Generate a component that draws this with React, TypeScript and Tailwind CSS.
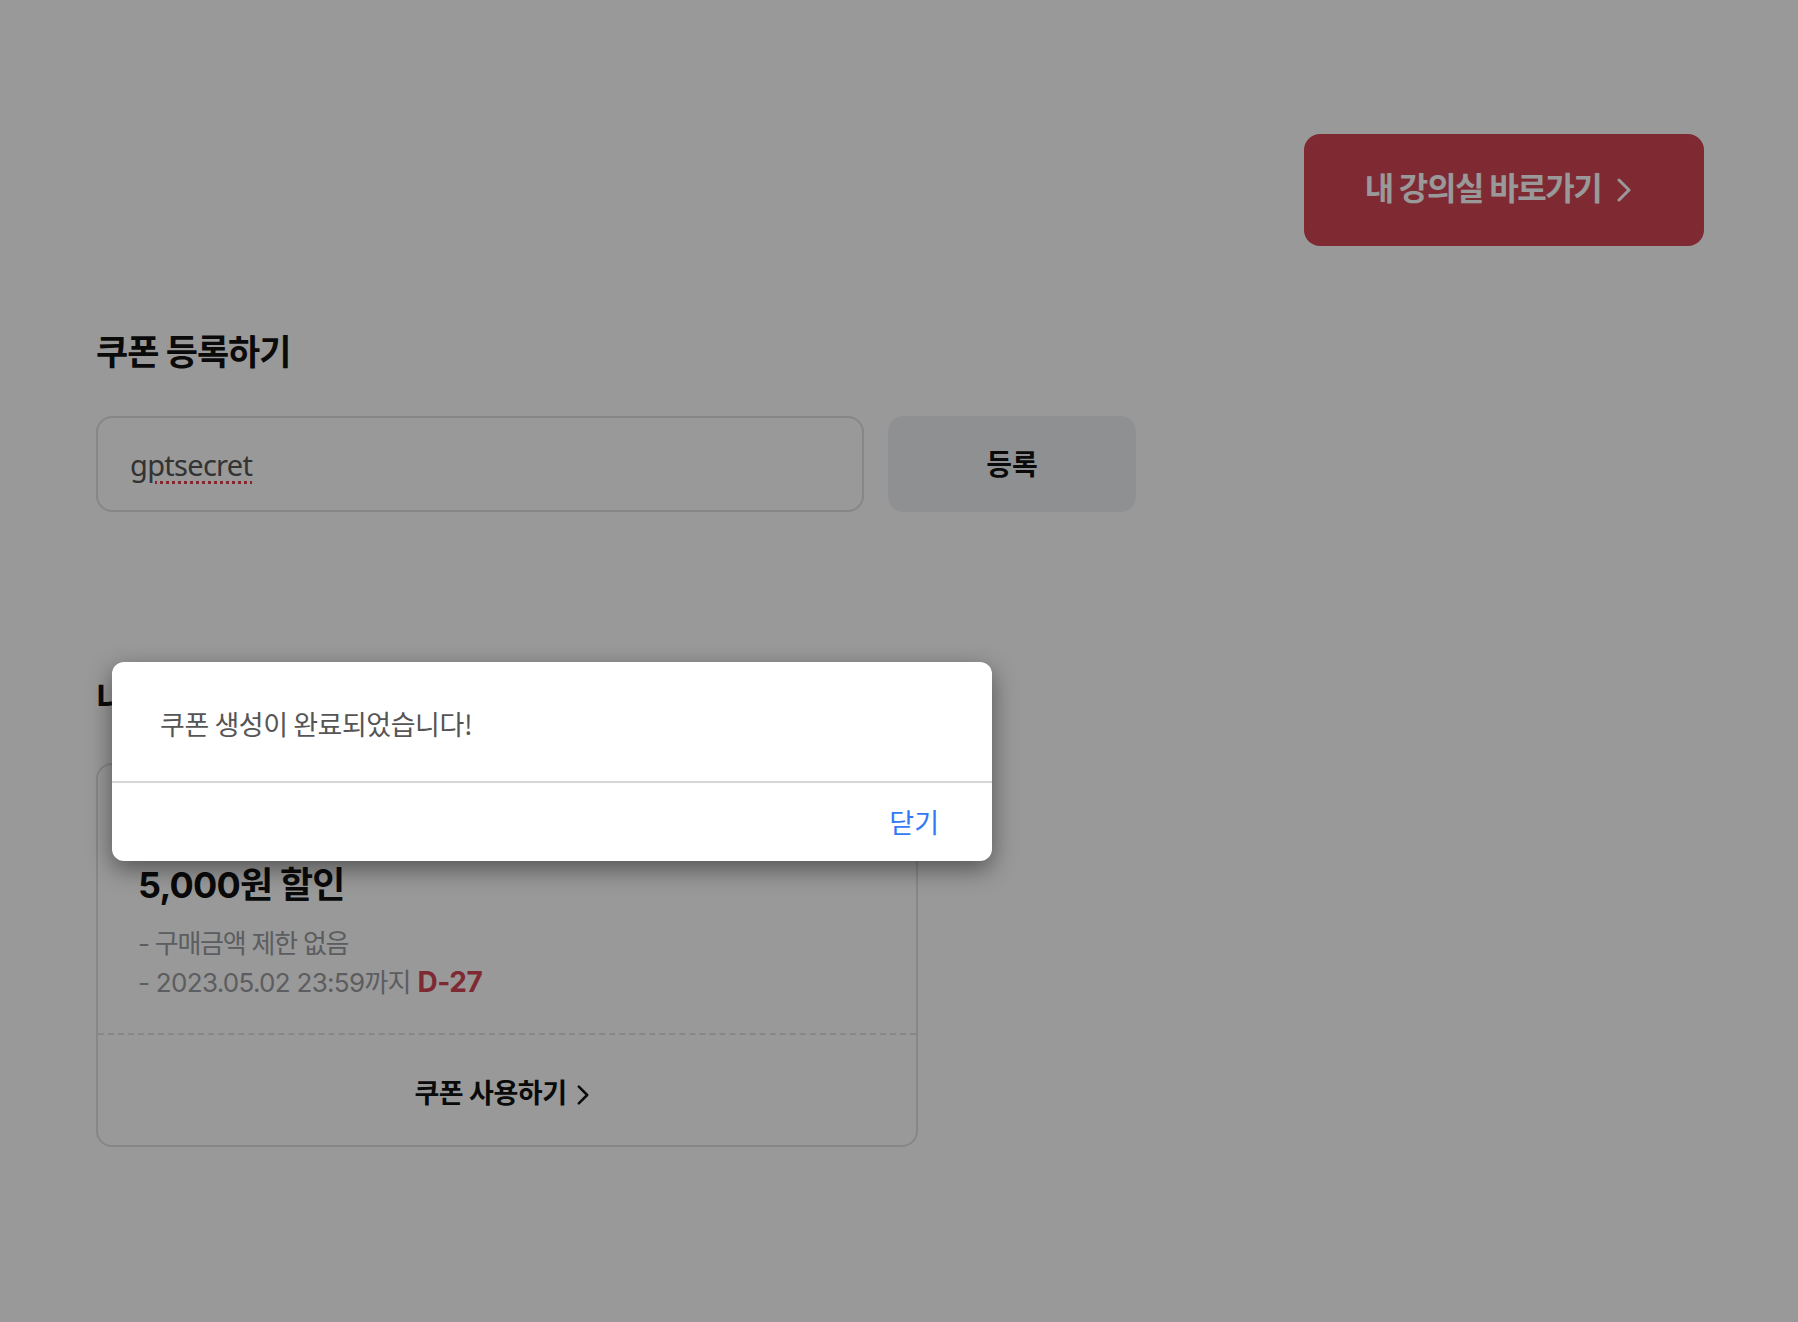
import React from 'react';

const Chevron = ({ className }: { className: string }) => (
  <svg viewBox="0 0 14 24" fill="none" stroke="currentColor" strokeWidth="3" strokeLinecap="round" strokeLinejoin="round" className={className}>
    <path d="M2 2l10 10L2 22" />
  </svg>
);

export default function App() {
  return (
    <div className="relative h-[1322px] w-full overflow-hidden bg-white font-['Inter','Noto_Sans_CJK_KR',sans-serif] text-[#111]">
      <main className="flex flex-col pl-[96px] pt-[134px]">
        {/* Top action */}
        <div className="flex justify-end pr-[94px]">
          <button className="flex h-[112px] w-[400px] items-center justify-center gap-[16px] rounded-[16px] bg-[#d44655] pr-[12px] text-[32px] font-bold tracking-[-1.4px] text-white">
            <span className="-mt-[2px]">내 강의실 바로가기</span>
            <Chevron className="h-[24px] w-[14px]" />
          </button>
        </div>

        {/* Coupon form */}
        <h2 className="mt-[82px] h-[48px] text-[35px] leading-[48px] font-bold tracking-[-1px]">쿠폰 등록하기</h2>
        <div className="mt-[40px] flex gap-[24px]">
          <div className="flex h-[96px] w-[768px] items-center rounded-[16px] border-2 border-[#dfe1e4] pl-[32px] pt-[1px] font-['Noto_Sans',sans-serif] text-[29px] tracking-[-0.7px] text-[#555]">
            <span className="underline decoration-[#e0404f] decoration-dotted decoration-[3px] underline-offset-[5px]">gptsecret</span>
          </div>
          <button className="h-[96px] w-[248px] rounded-[16px] bg-[#eef0f3] pt-[2px] text-[28px] font-bold">등록</button>
        </div>

        {/* My coupons */}
        <h2 className="mt-[162px] h-[48px] text-[35px] leading-[48px] font-bold tracking-[-1px]">내 쿠폰</h2>
        <div className="mt-[41px] flex h-[384px] w-[822px] flex-col rounded-[16px] border-2 border-[#dfe1e4]">
          <div className="h-[270px] border-b-2 border-dashed border-[#dfe1e4] pt-[95px] pl-[40px]">
            <p className="h-[50px] text-[36px] leading-[50px] font-bold tracking-[-0.8px]">5,000원 할인</p>
            <p className="mt-[15px] text-[26px] leading-[38px] tracking-[-1.25px] text-[#999ca1]">- 구매금액 제한 없음</p>
            <p className="text-[26px] leading-[38px] tracking-[-0.7px] text-[#999ca1]">
              - 2023.05.02 23:59까지 <span className="text-[28px] font-bold tracking-[-0.4px] text-[#d44655]">D-27</span>
            </p>
          </div>
          <div className="flex flex-1 items-center justify-center gap-[11px] pt-[9px] pr-[10px] text-[27px] font-bold tracking-[-0.5px]">
            쿠폰 사용하기
            <Chevron className="h-[20px] w-[12px]" />
          </div>
        </div>
      </main>

      {/* Dim layer and alert */}
      <div className="absolute inset-0 bg-black/40" />
      <div className="absolute top-[662px] left-[112px] flex h-[199px] w-[880px] flex-col rounded-[12px] bg-white font-['Noto_Sans_CJK_KR',sans-serif] shadow-[0_8px_24px_rgba(0,0,0,0.45)]">
        <div className="flex h-[121px] items-center border-b-2 border-[#d6d6d6] pt-[5px] pl-[48px] text-[27px] tracking-[-0.45px] text-[#555]">
          쿠폰 생성이 완료되었습니다!
        </div>
        <div className="flex flex-1 items-center justify-end pr-[53px] text-[27px] text-[#3478f6]">닫기</div>
      </div>
    </div>
  );
}
